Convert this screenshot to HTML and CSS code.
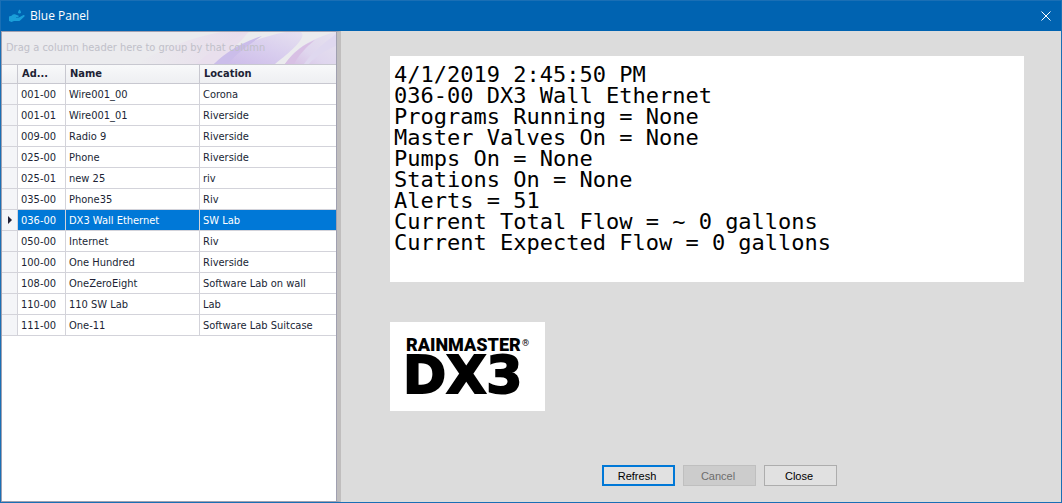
FILE: index.html
```
<!DOCTYPE html>
<html lang="en">
<head>
    <meta charset="UTF-8">
    <meta name="viewport" content="width=device-width, initial-scale=1.0">
    <title>Blue Panel</title>
    <link rel="stylesheet" href="styles.css">
</head>
<body>
    <header class="title-bar">
        <svg class="app-icon" viewBox="0 0 16 14" aria-hidden="true">
            <path d="M10.500 0.500c1 1.300 1.400 2 1.400 2.700a1.400 1.400 0 0 1-2.800 0c0-.7.400-1.400 1.400-2.700z"/>
            <path d="M0 7.500l2.500-.8c1.200-1.300 2.600-1.700 4-1.200l2.700.9c.9.400.7 1.500-.3 1.500H7v.6h3l4-2.200c1.200-.6 2.200.4 1.400 1.200l-4 3.700c-.8.7-1.500.9-2.500.9H5L2.500 13 0 12z"/>
        </svg>
        <h1>Blue Panel</h1>
        <button class="close-btn" aria-label="Close window">
            <svg viewBox="0 0 10 10" aria-hidden="true">
                <path d="M0.500 0.500l9 9M9.500 0.500l-9 9"/>
            </svg>
        </button>
    </header>

    <main>
        <section class="grid-panel">
            <div class="group-panel">
                <svg class="swirl" viewBox="0 0 200 32" preserveAspectRatio="xMaxYMid slice" aria-hidden="true">
                    <defs>
                        <linearGradient id="pink" x1="0" x2="1">
                            <stop offset="0" stop-color="#ebebee"/>
                            <stop offset="1" stop-color="#e8dcec"/>
                        </linearGradient>
                        <linearGradient id="violet" x1="0" y1="1" x2="1" y2="0">
                            <stop offset="0" stop-color="#cbb9e8"/>
                            <stop offset="0.5" stop-color="#d8cdee"/>
                            <stop offset="1" stop-color="#e6e1f0"/>
                        </linearGradient>
                        <linearGradient id="petal" x1="0" y1="1" x2="1" y2="0">
                            <stop offset="0" stop-color="#d6bde3"/>
                            <stop offset="0.4" stop-color="#dfd6ee"/>
                            <stop offset="1" stop-color="#e6e2ee"/>
                        </linearGradient>
                    </defs>
                    <path d="M0 32C30 14 60 5 85 0h28C98 11 84 20 68 32z" fill="url(#pink)"/>
                    <path d="M60 32C76 18 94 8 112 0C104 12 90 22 78 32z" fill="#e9dfed"/>
                    <path d="M78 32C95 18 118 6 150 0h15c6 5-7 17-26 32z" fill="url(#violet)"/>
                    <path d="M78 32C90 20 106 10 126 4C112 13 100 22 92 32z" fill="#cbbdea"/>
                    <path d="M149 32c8-12 21-24 50-32h1v32z" fill="url(#petal)"/>
                    <path d="M149 32c10-13 18-19 30-24-10 8-16 15-21 24z" fill="#d8c0e4"/>
                    <path d="M168 32c10-14 22-22 32-30v12c-10 4-20 10-27 18z" fill="#dfd8ef"/>
                </svg>
                <p>Drag a column header here to group by that column</p>
            </div>
            <table>
                <colgroup>
                    <col class="col-mark">
                    <col class="col-address">
                    <col class="col-name">
                    <col>
                </colgroup>
                <thead>
                    <tr><th></th><th>Ad...</th><th>Name</th><th>Location</th></tr>
                </thead>
                <tbody>
                    <tr><td></td><td>001-00</td><td>Wire001_00</td><td>Corona</td></tr>
                    <tr><td></td><td>001-01</td><td>Wire001_01</td><td>Riverside</td></tr>
                    <tr><td></td><td>009-00</td><td>Radio 9</td><td>Riverside</td></tr>
                    <tr><td></td><td>025-00</td><td>Phone</td><td>Riverside</td></tr>
                    <tr><td></td><td>025-01</td><td>new 25</td><td>riv</td></tr>
                    <tr><td></td><td>035-00</td><td>Phone35</td><td>Riv</td></tr>
                    <tr class="selected">
                        <td><svg class="marker" viewBox="0 0 4 8" aria-hidden="true"><path d="M0 0l4 4-4 4z"/></svg></td>
                        <td>036-00</td><td>DX3 Wall Ethernet</td><td>SW Lab</td>
                    </tr>
                    <tr><td></td><td>050-00</td><td>Internet</td><td>Riv</td></tr>
                    <tr><td></td><td>100-00</td><td>One Hundred</td><td>Riverside</td></tr>
                    <tr><td></td><td>108-00</td><td>OneZeroEight</td><td>Software Lab on wall</td></tr>
                    <tr><td></td><td>110-00</td><td>110 SW Lab</td><td>Lab</td></tr>
                    <tr><td></td><td>111-00</td><td>One-11</td><td>Software Lab Suitcase</td></tr>
                </tbody>
            </table>
        </section>

        <section class="detail">
            <pre class="screen">4/1/2019 2:45:50 PM
036-00 DX3 Wall Ethernet
Programs Running = None
Master Valves On = None
Pumps On = None
Stations On = None
Alerts = 51
Current Total Flow = ~ 0 gallons
Current Expected Flow = 0 gallons</pre>

            <svg class="logo" viewBox="0 0 155 89" role="img" aria-label="Rainmaster DX3">
                <text class="logo-brand" x="16" y="29">RAINMASTER</text>
                <text class="logo-reg" x="132" y="24">®</text>
                <text class="logo-model" x="13" y="71">DX3</text>
            </svg>

            <div class="actions">
                <button class="btn primary">Refresh</button>
                <button class="btn" disabled>Cancel</button>
                <button class="btn">Close</button>
            </div>
        </section>
    </main>
</body>
</html>
```

FILE: styles.css
```
:root {
    --title-bg: #0063b1;
    --frame: #1a6fb5;
    --panel-bg: #dcdcdc;
    --grid-line: #d3d3da;
    --grid-border: #a0a0b0;
    --select: #0078d7;
    --text: #201f35;
}

* {
    margin: 0;
    padding: 0;
    box-sizing: border-box;
}

body {
    font-family: "DejaVu Sans Condensed", "Open Sans", sans-serif;
    font-size: 11px;
    color: var(--text);
    background: var(--panel-bg);
    border: 1px solid var(--frame);
    min-height: 100vh;
    display: flex;
    flex-direction: column;
}

/* Title bar */
.title-bar {
    display: flex;
    align-items: center;
    height: 30px;
    padding: 0 10px 0 8px;
    background: var(--title-bg);
    color: #fff;
}

.app-icon {
    width: 16px;
    height: 14px;
    margin-right: 5px;
    fill: #1a9fd9;
}

.title-bar h1 {
    flex: 1;
    font-family: "Open Sans", sans-serif;
    font-size: 12px;
    font-weight: normal;
    line-height: 16px;
}

.close-btn {
    display: flex;
    background: none;
    border: none;
}

.close-btn svg {
    width: 10px;
    height: 10px;
    stroke: #fff;
    fill: none;
}

main {
    flex: 1;
    display: flex;
}

/* Controller list */
.grid-panel {
    width: 340px;
    flex-shrink: 0;
    background: #fff;
    border: 1px solid var(--grid-border);
    border-right: 4px solid #c0bebe;
    box-shadow: inset -1px 0 var(--grid-border);
    padding-right: 1px;
}

.group-panel {
    position: relative;
    display: flex;
    align-items: center;
    height: 32px;
    padding-left: 4px;
    background: #ebebee;
    color: #c0c0c9;
    overflow: hidden;
}

.swirl {
    position: absolute;
    right: 0;
    top: 0;
    width: 200px;
    height: 32px;
}

.group-panel p {
    position: relative;
    line-height: 16px;
}

table {
    width: 100%;
    table-layout: fixed;
    border-collapse: separate;
    border-spacing: 0;
}

.col-mark {
    width: 16px;
}

.col-address {
    width: 48px;
}

.col-name {
    width: 134px;
}

th, td {
    height: 21px;
    padding: 1px 3px 0;
    border-right: 1px solid var(--grid-line);
    border-bottom: 1px solid var(--grid-line);
    text-align: left;
    line-height: 18px;
    white-space: nowrap;
    overflow: hidden;
    text-overflow: ellipsis;
}

th {
    height: 20px;
    padding: 0 4px;
    border-top: 1px solid #c8c8d0;
    border-color: #c8c8d0;
    background: linear-gradient(#f8f9fa, #eeeff2);
}

th:last-child, td:last-child {
    border-right: none;
}

td:first-child {
    background: #f4f5f8;
    padding: 0 6px;
}

.selected td:not(:first-child) {
    background: var(--select);
    color: #fff;
}

.marker {
    display: block;
    width: 4px;
    height: 8px;
    fill: var(--text);
}

/* Controller status */
.detail {
    flex: 1;
    min-width: 0;
    display: flex;
    flex-direction: column;
    align-items: flex-start;
    padding: 25px 37px 16px 49px;
}

.screen {
    width: 100%;
    min-height: 226px;
    padding: 8px 4px;
    background: #fff;
    color: #000;
    font-family: "DejaVu Sans Mono", monospace;
    font-size: 22px;
    line-height: 21px;
    overflow: hidden;
}

.logo {
    width: 155px;
    height: 89px;
    margin-top: 40px;
    background: #fff;
}

.logo-brand {
    font-family: Roboto, sans-serif;
    font-size: 18px;
    font-weight: 900;
}

.logo-reg {
    font-family: Roboto, sans-serif;
    font-size: 9px;
}

.logo-model {
    font-family: "DejaVu Sans", sans-serif;
    font-size: 52px;
    font-weight: bold;
    stroke: #000;
    stroke-width: 2px;
}

.actions {
    display: flex;
    justify-content: center;
    gap: 8px;
    width: 100%;
    margin-top: auto;
    padding-left: 25px;
}

.btn {
    width: 73px;
    height: 21px;
    padding-right: 3px;
    font-family: "Liberation Sans", sans-serif;
    font-size: 11px;
    color: #000;
    background: #e1e1e1;
    border: 1px solid #adadad;
}

.btn.primary {
    border: 2px solid var(--select);
}

.btn:disabled {
    color: #6d6d6d;
    background: #ccc;
    border-color: #bfbfbf;
}
```
